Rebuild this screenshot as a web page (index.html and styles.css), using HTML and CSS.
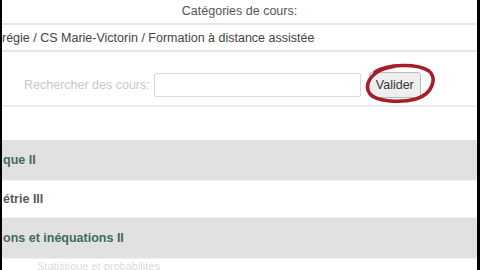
FILE: index.html
```html
<!DOCTYPE html>
<html lang="fr">

<head>
    <meta charset="utf-8">
    <meta name="viewport" content="width=device-width, initial-scale=1.0">
    <title>Catégories de cours</title>
    <link rel="stylesheet" href="styles.css">
</head>

<body>
    <div class="page">
        <header class="titre">Catégories de cours:</header>

        <div class="fil">régie / CS Marie-Victorin / Formation à distance assistée</div>

        <form class="recherche">
            <label for="q">Rechercher des cours:</label>
            <input type="text" id="q">
            <span class="bouton-zone">
                <button type="button">Valider</button>
                <svg class="cercle" width="72" height="42" viewBox="0 0 72 42">
                    <path d="M10 9 C22 1 52 0 64 8 C72 15 68 31 51 36 C36 40 12 39 5 31 C0 25 2 15 14 8 C20 5 26 4 31 3" fill="none" stroke="#a51d27" stroke-width="3.5" stroke-linecap="round"/>
                </svg>
            </span>
        </form>

        <section class="liste">
            <div class="rang gris"><a href="#">que II</a></div>
            <div class="rang"><a href="#" class="sombre">étrie III</a></div>
            <div class="rang gris"><a href="#">ons et inéquations II</a></div>
            <div class="rang dernier"><a href="#" class="pale">Statistique et probabilités</a></div>
        </section>
    </div>
</body>

</html>
```

FILE: styles.css
```css
body {
    margin: 0;
    font-family: "Liberation Sans", Arial, sans-serif;
    font-size: 12px;
    background-color: #000;
}

.page {
    height: 270px;
    margin-left: 2px;
    margin-right: 3px;
    background-color: #fff;
    overflow: hidden;
}

.titre {
    height: 23px;
    line-height: 22px;
    text-align: center;
    color: #555;
    font-size: 12.5px;
    border-bottom: 2px solid #e6e6e6;
}

.fil {
    height: 25px;
    line-height: 26px;
    color: #444;
    font-size: 12.5px;
    border-bottom: 2px solid #e6e6e6;
}

.recherche {
    height: 40px;
    display: flex;
    align-items: center;
    padding: 13px 0 0 22px;
    border-bottom: 2px solid #ececec;
}

.recherche label {
    color: #c8c8c8;
    font-size: 12.5px;
    margin-right: 4px;
}

.recherche input {
    width: 203px;
    height: 20px;
    border: 1px solid #d8d8d8;
    border-radius: 2px;
    padding: 1px;
    margin-right: 8px;
}

.bouton-zone {
    position: relative;
}

.bouton-zone button {
    height: 26px;
    padding: 0 6px;
    font-family: "Liberation Sans", Arial, sans-serif;
    font-size: 12.5px;
    color: #333;
    background-color: #eee;
    border: 1px solid #bbb;
    border-radius: 3px;
}

.cercle {
    position: absolute;
    left: -4px;
    top: -9px;
}

.liste {
    margin-top: 33px;
}

.rang {
    height: 36px;
    display: flex;
    align-items: center;
    padding-left: 1px;
    border-bottom: 1px solid #f2f2f2;
}

.rang.gris {
    height: 40px;
    background-color: #e1e1e1;
}

.rang.dernier {
    align-items: flex-start;
    padding-top: 1px;
}

.rang a {
    text-decoration: none;
    font-weight: bold;
    font-size: 12.5px;
    color: #3f6b5f;
}

.rang a.sombre {
    color: #5a5a5a;
}

.rang a.pale {
    color: #dcdcdc;
    font-weight: normal;
    font-size: 11px;
    padding-left: 34px;
}
```
